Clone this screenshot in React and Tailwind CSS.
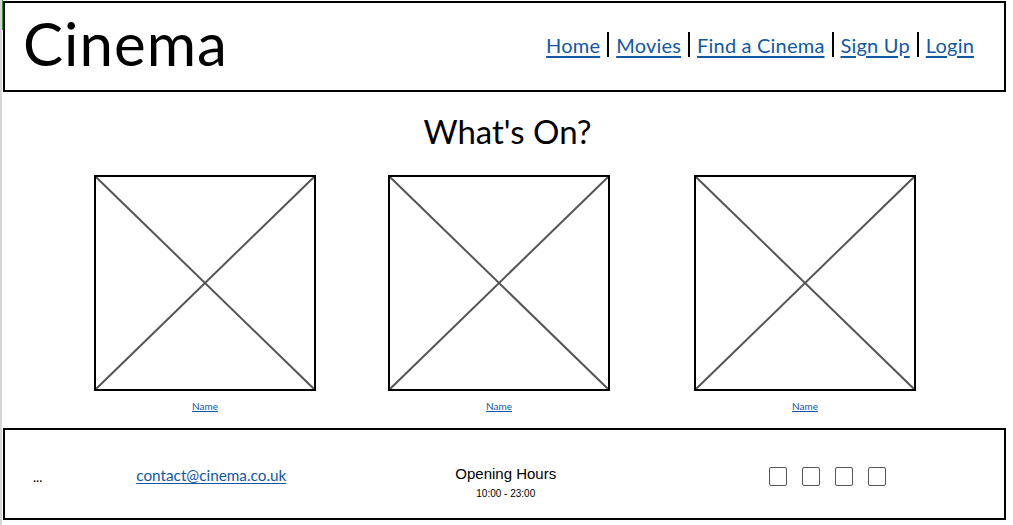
import React from 'react';

const navLinks = ['Home', 'Movies', 'Find a Cinema', 'Sign Up', 'Login'];
const movies = [
  { name: 'Name', ml: 'ml-[92px]' },
  { name: 'Name', ml: 'ml-[72px]' },
  { name: 'Name', ml: 'ml-[84px]' },
];

const Placeholder = () => (
  <div className="relative w-[222px] h-[216px] border-2 border-black bg-white">
    <svg className="absolute inset-0 w-full h-full" viewBox="0 0 218 212" preserveAspectRatio="none">
      <line x1="0" y1="0" x2="218" y2="212" stroke="#555" strokeWidth="2" />
      <line x1="218" y1="0" x2="0" y2="212" stroke="#555" strokeWidth="2" />
    </svg>
  </div>
);

const App = () => {
  return (
    <div
      className="relative w-[1013px] h-[525px] bg-white overflow-hidden border-l-2 border-[#d6d6d6]"
      style={{ fontFamily: 'Lato, "Noto Sans", sans-serif' }}
    >
      <div className="absolute left-[-2px] top-0 w-[3px] h-[30px] bg-[#2e9b2e]" />

      {/* Header */}
      <header className="ml-[1px] mt-[1px] w-[1003px] h-[91px] border-2 border-black flex items-center justify-between pl-[18px] pr-[30px]">
        <h1 className="text-[60px] leading-none text-black tracking-[1px] pb-[8px]">Cinema</h1>
        <nav className="flex items-center text-[20px] tracking-[0.2px] text-[#1158a5] pb-[4px]">
          {navLinks.map((link, idx) => (
            <React.Fragment key={link}>
              {idx > 0 && <span className="w-[2px] h-[25px] bg-black mx-[7px]" />}
              <a href="#" className="underline underline-offset-[3px] decoration-[1.5px]">
                {link}
              </a>
            </React.Fragment>
          ))}
        </nav>
      </header>

      {/* What's On */}
      <section>
        <h2 className="text-center text-[33px] leading-none text-black mt-[23px]">What's On?</h2>
        <div className="flex mt-[27px]">
          {movies.map((movie, idx) => (
            <div key={idx} className={`${movie.ml} flex flex-col items-center`}>
              <Placeholder />
              <a href="#" className="mt-[8px] text-[10px] text-[#1158a5] underline">
                {movie.name}
              </a>
            </div>
          ))}
        </div>
      </section>

      {/* Footer */}
      <footer className="ml-[1px] mt-[14px] w-[1003px] h-[92px] border-2 border-black flex items-center">
        <span className="ml-[28px] text-[13px] text-black pt-[8px]">...</span>
        <a href="#" className="ml-[94px] text-[15.3px] text-[#1158a5] underline underline-offset-2 pt-[2px]">
          contact@cinema.co.uk
        </a>
        <div
          className="ml-[169px] flex flex-col items-center text-black pt-[18px]"
          style={{ fontFamily: '"Liberation Sans", Arial, sans-serif' }}
        >
          <span className="text-[15px] leading-tight">Opening Hours</span>
          <span className="text-[10px] mt-[2px]">10:00 - 23:00</span>
        </div>
        <div className="ml-[213px] flex gap-[15px] pt-[4px]">
          {[0, 1, 2, 3].map((i) => (
            <span key={i} className="w-[18px] h-[19px] border border-[#555] rounded-[2px]" />
          ))}
        </div>
      </footer>
    </div>
  );
};

export default App;
